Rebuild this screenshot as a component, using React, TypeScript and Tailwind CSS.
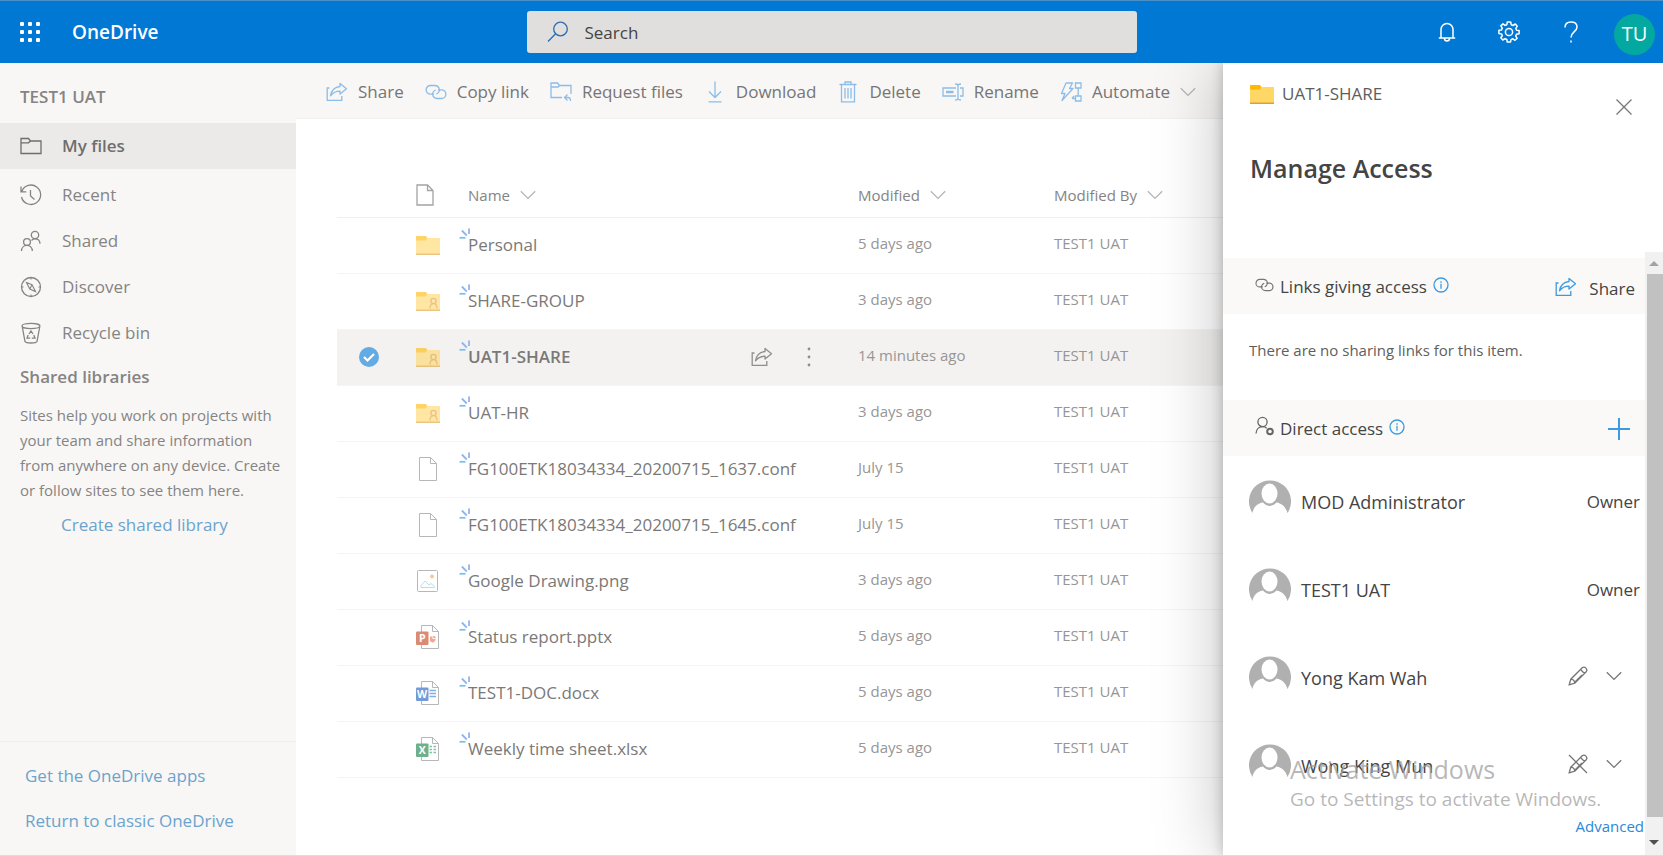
import React from 'react';

type IconProps = { className?: string };

const stroke = {
  fill: 'none',
  stroke: 'currentColor',
  strokeWidth: 1.3,
};

const ShareIcon: React.FC<IconProps> = ({ className }) => (
  <svg className={className} viewBox="0 0 22 20" {...stroke}>
    <path d="M3.500 6H1.200v12.400h14.600V14" />
    <path d="M14 1.500l6.500 5.300-6.500 5.300V9.200c-4 0-6.800 1.200-9.500 4.600C5.500 8.200 9 5 14 4.500z" strokeLinejoin="round" />
  </svg>
);

const LinkIcon: React.FC<IconProps> = ({ className }) => (
  <svg className={className} viewBox="0 0 22 16" {...stroke}>
    <path d="M9 10.200H5.500a4.300 4.300 0 0 1 0-8.700h4.500a4.300 4.300 0 0 1 3.800 6.500c-.6 1-1.500 1.600-2.500 2" />
    <path d="M13 5.800h3.500a4.300 4.300 0 0 1 0 8.700H12A4.300 4.300 0 0 1 8.200 8c.6-1 1.500-1.600 2.500-2" />
  </svg>
);

const RequestIcon: React.FC<IconProps> = ({ className }) => (
  <svg className={className} viewBox="0 0 22 20" {...stroke}>
    <path d="M12 15.500H1V1h6.500l2 2.500H21V12" />
    <path d="M1 5h7l1.500-1.500" />
    <path d="M17.500 12.500l-3 3 3 3M14.500 15.500h3.500c2 0 2.500 1.500 2.500 3.500" />
  </svg>
);

const DownloadIcon: React.FC<IconProps> = ({ className }) => (
  <svg className={className} viewBox="0 0 16 22" {...stroke}>
    <path d="M8 .5V16M2 10.500l6 6 6-6M1.500 20.800h13" />
  </svg>
);

const DeleteIcon: React.FC<IconProps> = ({ className }) => (
  <svg className={className} viewBox="0 0 18 22" {...stroke}>
    <path d="M.5 3.500h17M2.500 3.500v17.300h13V3.500M6 3.500V1h6v2.500" />
    <path d="M6 7v10.500M9 7v10.500M12 7v10.500" />
  </svg>
);

const RenameIcon: React.FC<IconProps> = ({ className }) => (
  <svg className={className} viewBox="0 0 22 18" {...stroke}>
    <path d="M14 13H1V5h13M18 5h3v8h-3" />
    <path d="M13 1c2 0 3 .5 3 1.500v13c0 1-1 1.500-3 1.500M19 1c-2 0-3 .5-3 1.500M19 17c-2 0-3-.5-3-1.500" />
    <path d="M4 9h7.500" strokeWidth="2.500" />
  </svg>
);

const AutomateIcon: React.FC<IconProps> = ({ className }) => (
  <svg className={className} viewBox="0 0 22 20" {...stroke}>
    <path d="M6 1h6.500L9.500 6.500h3.500L2 18.500l3-7H1.500z" strokeLinejoin="round" />
    <path d="M15.500 1H21v5h-5.500zM15.500 14H21v5h-5.500zM18.200 6v8M12 16.500h3.500M12 16.500l2-2.500" />
  </svg>
);

const ChevronIcon: React.FC<IconProps> = ({ className }) => (
  <svg className={className} viewBox="0 0 16 10" {...stroke}>
    <path d="M.8 1.200L8 8.400l7.200-7.200" />
  </svg>
);

const FolderOutlineIcon: React.FC<IconProps> = ({ className }) => (
  <svg className={className} viewBox="0 0 22 18" {...stroke}>
    <path d="M1 1.500h7.500l2 2.500H21v12.500H1z" />
    <path d="M1 5.800h7.500L10.500 4" />
  </svg>
);

const RecentIcon: React.FC<IconProps> = ({ className }) => (
  <svg className={className} viewBox="0 0 22 22" {...stroke}>
    <path d="M1.800 7.500A9.700 9.700 0 1 1 1.500 13M1 2.500v5.300h5.300M10.500 6v6l4 3.500" />
  </svg>
);

const PeopleIcon: React.FC<IconProps> = ({ className }) => (
  <svg className={className} viewBox="0 0 22 22" {...stroke}>
    <circle cx="15" cy="5" r="3.700" />
    <path d="M11.500 10.500c1-1.200 2.200-1.700 3.500-1.700 3 0 5 2 5 5" />
    <circle cx="7" cy="12" r="3.400" />
    <path d="M1.500 21c0-3.500 2.500-5.600 5.500-5.600s5.300 2.100 5.300 5.600" />
  </svg>
);

const CompassIcon: React.FC<IconProps> = ({ className }) => (
  <svg className={className} viewBox="0 0 22 22" {...stroke}>
    <circle cx="11" cy="11" r="9.500" />
    <path d="M6.500 6.500l5.500 2.300 3.500 6.700-5.700-2.500zM9.800 13l2.200-4.200M11 1.500v2M11 18.500v2M1.500 11h2M18.500 11h2" strokeWidth="1.100" />
  </svg>
);

const BinIcon: React.FC<IconProps> = ({ className }) => (
  <svg className={className} viewBox="0 0 22 22" {...stroke}>
    <path d="M2 4c0-3.500 18-3.500 18 0S2 7.500 2 4zM2.300 5L5 19.500c1 2 11 2 12 0L19.700 5" />
    <path d="M9 12l2-3 2 3M13.800 13l1.200 3.200h-3.200M8.200 13L7 16.200h3.200" />
  </svg>
);

const PageIcon: React.FC<IconProps> = ({ className }) => (
  <svg className={className} viewBox="0 0 18 22" {...stroke}>
    <path d="M1 1h10.500L17 6.500V21H1zM11.500 1v5.500H17" />
  </svg>
);

const InfoIcon: React.FC<IconProps> = ({ className }) => (
  <svg className={className} viewBox="0 0 16 16" {...stroke}>
    <circle cx="8" cy="8" r="7" />
    <path d="M8 6.800v5M8 4.200v1.500" />
  </svg>
);

const PencilIcon: React.FC<IconProps & { off?: boolean }> = ({ className, off }) => (
  <svg className={className} viewBox="0 0 20 20" {...stroke}>
    <path d="M1.200 18.800l1.600-5.600L14.200 1.800c2.500-2 6 1.500 4 4L6.800 17.200zM12.500 3.500l4 4M2.800 13.200c2 .2 3.800 2 4 4M14 9L6 17" />
    {off && <path d="M1 1l18 18" />}
  </svg>
);

const PersonKeyIcon: React.FC<IconProps> = ({ className }) => (
  <svg className={className} viewBox="0 0 20 20" {...stroke}>
    <circle cx="7.500" cy="6" r="4.600" />
    <path d="M1 17.500c.3-4.200 3-6.900 6.500-6.900 1.800 0 3.200.6 4.200 1.700" />
    <circle cx="15" cy="15.500" r="2.800" strokeWidth="2" />
  </svg>
);

const FolderIcon: React.FC<IconProps & { shared?: boolean }> = ({ className, shared }) => (
  <svg className={className} viewBox="0 0 24 20">
    <path d="M0 3h24v16H0z" fill="#ffd766" />
    <path d="M0 1.500Q0 1 .5 1h9.300l1.700 1.700L9.500 5.500H0z" fill="#ffb900" />
    <path d="M0 18.500h24V20H0z" fill="#e0a030" />
    {shared && (
      <g fill="none" stroke="#dd9a3c" strokeWidth="1.300">
        <circle cx="17.500" cy="10" r="2.600" />
        <path d="M14 17.500c0-3 1.300-4.800 3.500-4.800S21 14.500 21 17.500" />
      </g>
    )}
  </svg>
);

const FileIcon: React.FC = () => (
  <svg className="h-6 w-6" viewBox="0 0 24 24" fill="#fff" stroke="#888" strokeWidth="1">
    <path d="M3.500.5h11l6 6v17h-17zM14.500.5v6h6" />
  </svg>
);

const ImageIcon: React.FC = () => (
  <svg className="h-6 w-6" viewBox="0 0 24 24" fill="none">
    <rect x="1.500" y="1.500" width="20" height="21" rx="1" stroke="#888" />
    <circle cx="16" cy="7.500" r="1.900" fill="#f2a44a" />
    <path d="M5 18.500v-2l4-4.500 4 4 2-1.500 3.500 3v1z" stroke="#8cc9d8" />
  </svg>
);

const OfficeIcon: React.FC<{ letter: string }> = ({ letter }) => {
  const color = letter === 'P' ? '#c43e1c' : letter === 'W' ? '#185abd' : '#107c41';
  return (
    <svg className="h-6 w-6" viewBox="0 0 24 24" fill="none">
      <path d="M5.500.5h11l6 6v17h-17zM16.500.5v6h6" fill="#fff" stroke="#888" />
      {letter === 'P' && <path d="M14 11.500h2.500V14h3a3 3 0 0 1-5.500 2zM17.300 10.500a3 3 0 0 1 2.500 2.700h-2.500z" fill="#ed6c47" />}
      {letter === 'W' && <path d="M13.500 9.500H20M13.500 12.500H20M13.500 15.500H20" stroke="#2b7cd3" strokeWidth="1.300" />}
      {letter === 'X' && (
        <path d="M13.500 9.500H20M13.500 12.500H20M13.500 15.500H20" stroke="#21a366" strokeWidth="1.500" strokeDasharray="2.500 1.500" />
      )}
      <rect x="0" y="6.500" width="12.500" height="13.500" rx="1" fill={color} />
      <text x="6.200" y="17.200" textAnchor="middle" fontSize="10.500" fontWeight="700" fontFamily="Open Sans, sans-serif" fill="#fff">
        {letter}
      </text>
    </svg>
  );
};

const NewMark: React.FC = () => (
  <svg className="absolute -left-[9px] -top-1 h-3 w-3" viewBox="0 0 12 12" fill="none" strokeWidth="1.800">
    <path d="M.5 9.800h6" stroke="#7fc0e8" />
    <path d="M2.800 2.500l5 5M10 .5V6" stroke="#93b4ec" />
  </svg>
);

const Avatar: React.FC = () => (
  <svg className="mb-3 h-9 w-[42px] shrink-0" viewBox="0 0 42 36">
    <path d="M3.500 35A21 21 0 1 1 38.500 35z" fill="#b0b0b0" />
    <ellipse cx="20.500" cy="15.500" rx="8" ry="10" fill="#fff" />
    <path d="M3 36.500c1.200-6 4-11 11-12 4 4.500 9 4.500 13.500 0 6.500 1 10 6 11.500 12z" fill="#fff" />
  </svg>
);

const commands = [
  { label: 'Share', icon: <ShareIcon className="h-5 w-[22px]" /> },
  { label: 'Copy link', icon: <LinkIcon className="h-4 w-[22px]" /> },
  { label: 'Request files', icon: <RequestIcon className="h-5 w-[22px]" /> },
  { label: 'Download', icon: <DownloadIcon className="h-[22px] w-4" /> },
  { label: 'Delete', icon: <DeleteIcon className="h-[22px] w-[18px]" /> },
  { label: 'Rename', icon: <RenameIcon className="h-[18px] w-[22px]" /> },
  { label: 'Automate', icon: <AutomateIcon className="h-5 w-[22px]" />, menu: true },
];

const navItems = [
  { label: 'Recent', icon: <RecentIcon className="h-[22px] w-[22px]" /> },
  { label: 'Shared', icon: <PeopleIcon className="h-[22px] w-[22px]" /> },
  { label: 'Discover', icon: <CompassIcon className="h-[22px] w-[22px]" /> },
  { label: 'Recycle bin', icon: <BinIcon className="h-[22px] w-[22px]" /> },
];

const sharedFolder = <FolderIcon className="h-5 w-6" shared />;

const files = [
  { name: 'Personal', modified: '5 days ago', icon: <FolderIcon className="h-5 w-6" /> },
  { name: 'SHARE-GROUP', modified: '3 days ago', icon: sharedFolder },
  { name: 'UAT1-SHARE', modified: '14 minutes ago', icon: sharedFolder, selected: true },
  { name: 'UAT-HR', modified: '3 days ago', icon: sharedFolder },
  { name: 'FG100ETK18034334_20200715_1637.conf', modified: 'July 15', icon: <FileIcon /> },
  { name: 'FG100ETK18034334_20200715_1645.conf', modified: 'July 15', icon: <FileIcon /> },
  { name: 'Google Drawing.png', modified: '3 days ago', icon: <ImageIcon /> },
  { name: 'Status report.pptx', modified: '5 days ago', icon: <OfficeIcon letter="P" /> },
  { name: 'TEST1-DOC.docx', modified: '5 days ago', icon: <OfficeIcon letter="W" /> },
  { name: 'Weekly time sheet.xlsx', modified: '5 days ago', icon: <OfficeIcon letter="X" /> },
];

const people = [
  { name: 'MOD Administrator', role: 'owner' },
  { name: 'TEST1 UAT', role: 'owner' },
  { name: 'Yong Kam Wah', role: 'edit' },
  { name: 'Wong King Mun', role: 'view' },
];

const Header: React.FC = () => (
  <header className="relative z-20 flex h-[63px] shrink-0 items-center border-t border-[#4a90c8] bg-[#0078d4] text-white">
    <div className="flex flex-1 items-center">
      <button aria-label="App launcher" className="ml-5">
        <svg className="h-5 w-5" viewBox="0 0 20 20" fill="currentColor">
          {[0, 8, 16].map((y) => [0, 8, 16].map((x) => <rect key={`${x}-${y}`} x={x} y={y} width="4" height="4" rx="1" />))}
        </svg>
      </button>
      <a href="#home" className="ml-8 text-[19px] font-semibold">OneDrive</a>
    </div>
    <form className="flex h-[42px] w-[610px] items-center rounded-[3px] bg-[#e0dfde]">
      <svg className="ml-5 h-[22px] w-[22px] text-[#2b6cb0]" viewBox="0 0 22 22" {...stroke}>
        <circle cx="13.500" cy="8" r="6.800" />
        <path d="M8.600 12.800L1 20.500" />
      </svg>
      <input aria-label="Search" placeholder="Search" className="ml-4 flex-1 bg-transparent pt-[2px] text-[17px] outline-none placeholder:text-[#444]" />
    </form>
    <div className="flex flex-1 items-center justify-end">
      <button aria-label="Notifications" className="mr-[42px]">
        <svg className="h-5 w-[18px]" viewBox="0 0 18 20" {...stroke} strokeWidth="1.500">
          <path d="M3 16V7.500a6 6 0 0 1 12 0V16M.8 16h16.400M6.500 16.500a2.500 2.500 0 0 0 5 0" />
        </svg>
      </button>
      <button aria-label="Settings" className="mr-11">
        <svg className="h-[22px] w-[22px]" viewBox="0 0 22 22" {...stroke} strokeWidth="1.500">
          <circle cx="11" cy="11" r="3.600" />
          <path
            d="M9.300 1h3.400l.5 2.700 1.800.8L17.300 3l2 2.200-1.500 2.200.8 1.800 2.500.3v3.200l-2.600.5-.8 1.800 1.500 2.300-2.200 2-2.200-1.500-1.800.8-.4 2.400H9.300l-.5-2.500-1.800-.8L4.800 19l-2-2.200 1.500-2.100-.8-1.800-2.600-.5V9.300l2.600-.4.8-1.800-1.500-2.200 2.200-2L7 4.400l1.800-.7z"
            strokeLinejoin="round"
          />
        </svg>
      </button>
      <button aria-label="Help" className="mr-9">
        <svg className="h-[22px] w-[14px]" viewBox="0 0 14 22" {...stroke} strokeWidth="1.500">
          <path d="M1 6.500C1 3 3.500 1 7 1s6 2 6 5.200C13 10.500 7 11 7 16.500M7 19.500v2" />
        </svg>
      </button>
      <button aria-label="Account" className="mr-2 mt-1 h-[41px] w-[41px] rounded-full bg-[#03a9a0] text-xl">TU</button>
    </div>
  </header>
);

const Sidebar: React.FC = () => (
  <nav className="flex w-[296px] shrink-0 flex-col bg-[#f8f7f6] text-[17px] text-[#858483]">
    <h2 className="mt-5 px-5 pb-3 leading-7 font-semibold">TEST1 UAT</h2>
    <a href="#files" className="flex h-[46px] items-center bg-[#ebeae9] px-5 font-semibold text-[#6f6e6d]">
      <FolderOutlineIcon className="mr-5 h-[18px] w-[22px]" />
      My files
    </a>
    <ul className="pt-[3px]">
      {navItems.map((item) => (
        <li key={item.label}>
          <a href="#nav" className="flex h-[46px] items-center px-5">
            <span className="mr-5">{item.icon}</span>
            {item.label}
          </a>
        </li>
      ))}
    </ul>
    <h3 className="mt-[7px] px-5 leading-7 font-semibold">Shared libraries</h3>
    <p className="pt-3 pr-3 pl-5 text-[15px] leading-[25px]">
      Sites help you work on projects with your team and share information from anywhere on any device. Create or follow sites to see them here.
    </p>
    <a href="#create" className="mt-[6px] pl-[61px] leading-8 text-[#6ba3cc]">Create shared library</a>
    <div className="mt-auto flex flex-col gap-[17px] border-t border-[#f0efee] pt-5 pb-5 pl-[25px] leading-7 text-[#6ba3cc]">
      <a href="#apps">Get the OneDrive apps</a>
      <a href="#classic">Return to classic OneDrive</a>
    </div>
  </nav>
);

const SortHeader: React.FC<{ children: string }> = ({ children }) => (
  <th className="pt-2 text-left text-[15px] font-normal text-[#858483]">
    <button className="flex items-center gap-[10px] whitespace-nowrap">
      {children}
      <ChevronIcon className="h-[10px] w-4 text-[#b5b5b5]" />
    </button>
  </th>
);

const FileList: React.FC = () => (
  <main className="flex min-w-0 flex-1 flex-col">
    <div className="flex h-[56px] shrink-0 items-center gap-[21px] border-b border-[#f1f0ef] bg-[#f8f7f6] pt-[2px] pl-[30px] text-[17px] text-[#767574]">
      {commands.map((cmd) => (
        <button key={cmd.label} className="flex items-center gap-[10px] whitespace-nowrap">
          <span className="flex w-[22px] justify-center text-[#8cbde8]">{cmd.icon}</span>
          {cmd.label}
          {cmd.menu && <ChevronIcon className="h-[10px] w-4 text-[#b5b5b5]" />}
        </button>
      ))}
    </div>
    <div className="pt-[47px] pl-[41px]">
      <table className="w-full table-fixed border-collapse">
        <colgroup>
          <col className="w-[79px]" />
          <col className="w-[52px]" />
          <col className="w-[390px]" />
          <col className="w-[196px]" />
          <col />
        </colgroup>
        <thead>
          <tr className="h-[51px] border-b border-[#efefef]">
            <td />
            <th className="pt-2">
              <PageIcon className="h-[22px] w-[18px] text-[#a3a3a3]" />
            </th>
            <SortHeader>Name</SortHeader>
            <SortHeader>Modified</SortHeader>
            <SortHeader>Modified By</SortHeader>
          </tr>
        </thead>
        <tbody>
          {files.map((file) => (
            <tr key={file.name} className={`h-14 border-b border-[#f5f5f5] ${file.selected ? 'bg-[#f3f2f1]' : ''}`}>
              <td>
                <label className="ml-[21px] grid w-[22px] place-items-center">
                  <input
                    type="checkbox"
                    aria-label={`Select ${file.name}`}
                    defaultChecked={file.selected}
                    className="peer col-start-1 row-start-1 h-5 w-5 appearance-none rounded-full checked:bg-[#62abe5]"
                  />
                  <svg
                    className="pointer-events-none col-start-1 row-start-1 hidden h-3 w-3 peer-checked:block"
                    viewBox="0 0 12 12"
                    fill="none"
                    stroke="#fff"
                    strokeWidth="2.200"
                  >
                    <path d="M1 6l3.500 3.500L11 3" />
                  </svg>
                </label>
              </td>
              <td className="opacity-60">{file.icon}</td>
              <td className="text-[17px] text-[#7a7978]">
                <div className="relative flex items-center">
                  <NewMark />
                  <a href="#file" className={file.selected ? 'font-semibold' : ''}>{file.name}</a>
                  {file.selected && (
                    <div className="mr-[47px] ml-auto flex items-center gap-[34px] text-[#8f8e8d]">
                      <button aria-label="Share">
                        <ShareIcon className="h-5 w-[22px]" />
                      </button>
                      <button aria-label="More actions">
                        <svg className="h-5 w-1" viewBox="0 0 4 20" fill="currentColor">
                          <circle cx="2" cy="2" r="1.400" />
                          <circle cx="2" cy="10" r="1.400" />
                          <circle cx="2" cy="18" r="1.400" />
                        </svg>
                      </button>
                    </div>
                  )}
                </div>
              </td>
              <td className="pb-1 text-[15px] text-[#979695]">{file.modified}</td>
              <td className="pb-1 text-[15px] text-[#979695]">TEST1 UAT</td>
            </tr>
          ))}
        </tbody>
      </table>
    </div>
  </main>
);

const AccessPanel: React.FC = () => (
  <aside className="relative z-10 flex w-[440px] shrink-0 flex-col bg-white text-[#444] shadow-[0_0_64px_rgba(0,0,0,0.26),0_0_12px_rgba(0,0,0,0.22)]">
    <div className="flex h-[189px] shrink-0 justify-between pl-[27px]">
      <div>
        <div className="mt-[17px] flex items-center gap-2 text-[17px] leading-7 text-[#605e5c]">
          <FolderIcon className="h-5 w-6" />
          UAT1-SHARE
        </div>
        <h1 className="mt-10 text-[25px] leading-10 font-semibold">Manage Access</h1>
      </div>
      <button aria-label="Close" className="mt-9 mr-[31px] h-4 w-4 text-[#767676]">
        <svg viewBox="0 0 16 16" {...stroke}>
          <path d="M.5.5l15 15M15.500.5l-15 15" />
        </svg>
      </button>
    </div>
    <div className="flex flex-1">
      <div className="flex min-w-0 flex-1 flex-col pt-[6px]">
        <div className="flex h-14 items-center bg-[#faf9f8] pt-[2px] pr-[10px] pl-8 text-[17px]">
          <LinkIcon className="mr-[6px] mb-1 h-[14px] w-[19px] text-[#767676]" />
          Links giving access
          <InfoIcon className="mb-1 ml-[6px] h-4 w-4 text-[#3c9be0]" />
          <button className="ml-auto flex items-center gap-3 pt-1">
            <ShareIcon className="mb-1 h-5 w-[22px] text-[#3c9be0]" />
            Share
          </button>
        </div>
        <p className="flex h-[86px] items-center pb-[14px] pl-[26px] text-[15px] text-[#605e5c]">There are no sharing links for this item.</p>
        <div className="flex h-14 items-center bg-[#faf9f8] pt-[2px] pr-[15px] pl-8 text-[17px]">
          <PersonKeyIcon className="mr-[5px] mb-[6px] h-5 w-5 text-[#666]" />
          Direct access
          <InfoIcon className="mb-1 ml-[6px] h-4 w-4 text-[#3c9be0]" />
          <button aria-label="Add people" className="ml-auto text-[#3c9be0]">
            <svg className="h-[22px] w-[22px]" viewBox="0 0 22 22" {...stroke} strokeWidth="2">
              <path d="M11 0v22M0 11h22" />
            </svg>
          </button>
        </div>
        <ul className="pt-[2px]">
          {people.map((person) => (
            <li key={person.name} className="flex h-[88px] items-center pl-[26px] text-lg">
              <Avatar />
              <span className="ml-[10px]">{person.name}</span>
              {person.role === 'owner' ? (
                <span className="mr-[5px] ml-auto text-[17px]">Owner</span>
              ) : (
                <button aria-label={`Change access for ${person.name}`} className="mr-[23px] mb-1 ml-auto flex items-center gap-[18px] text-[#767676]">
                  <PencilIcon className="h-5 w-5" off={person.role === 'view'} />
                  <ChevronIcon className="h-[10px] w-4" />
                </button>
              )}
            </li>
          ))}
        </ul>
        <a href="#advanced" className="mt-1 mr-px self-end text-[15px] leading-6 text-[#2b88d8]">Advanced</a>
      </div>
      <div className="flex w-[18px] shrink-0 flex-col bg-[#f1f1f1]">
        <button aria-label="Scroll up" className="flex h-[22px] items-center justify-center">
          <svg className="h-[5px] w-[10px]" viewBox="0 0 10 5" fill="#a3a3a3"><path d="M0 5l5-5 5 5z" /></svg>
        </button>
        <div className="ml-[2px] flex-1 bg-[#c1c1c1]" />
        <button aria-label="Scroll down" className="flex h-[38px] items-center justify-center pt-3">
          <svg className="h-[5px] w-[10px]" viewBox="0 0 10 5" fill="#505050"><path d="M0 0l5 5 5-5z" /></svg>
        </button>
      </div>
    </div>
    <div className="pointer-events-none absolute bottom-[42px] left-[67px] whitespace-nowrap text-[#a0a0a0]/75">
      <p className="text-[25px] leading-8">Activate Windows</p>
      <p className="text-[19px] leading-7">Go to Settings to activate Windows.</p>
    </div>
  </aside>
);

const App: React.FC = () => (
  <div className="flex min-h-screen flex-col overflow-hidden border-b border-[#dcdcdc] bg-white font-['Open_Sans',sans-serif]">
    <Header />
    <div className="flex flex-1">
      <Sidebar />
      <FileList />
      <AccessPanel />
    </div>
  </div>
);

export default App;
